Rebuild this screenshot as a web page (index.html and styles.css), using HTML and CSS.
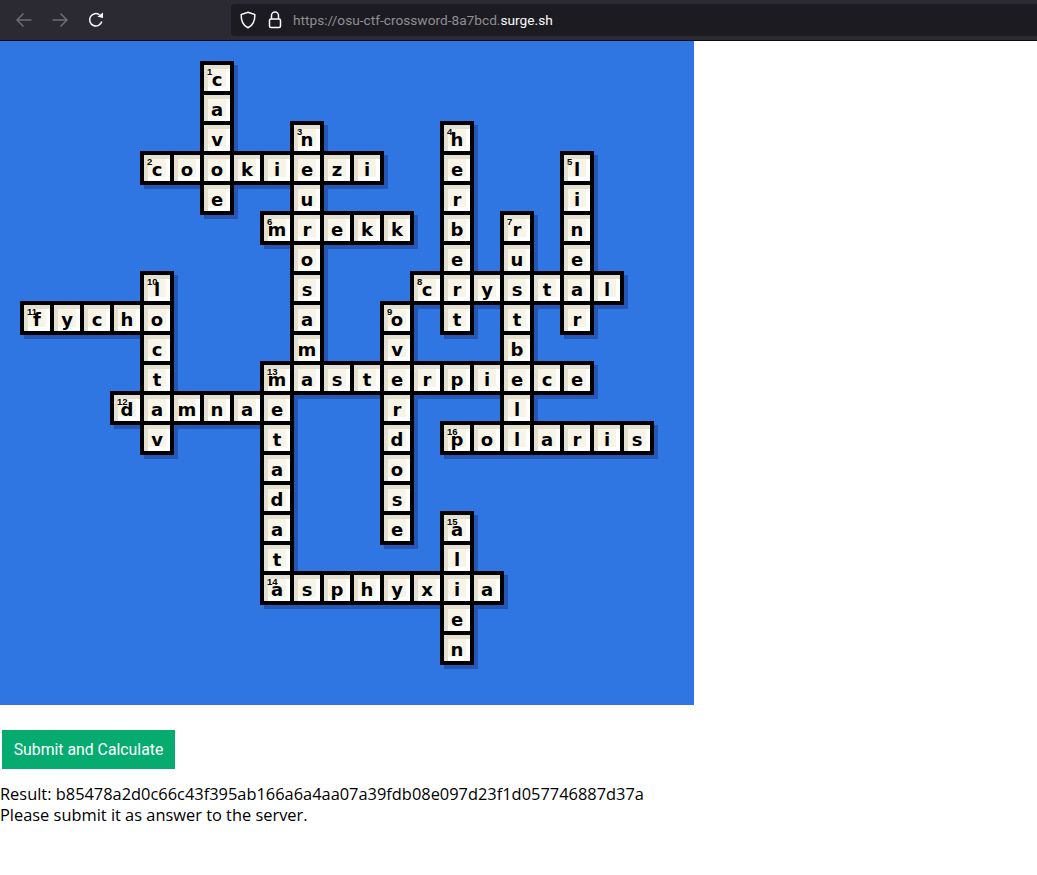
FILE: index.html
```html
<!DOCTYPE html>
<html lang="en">
<head>
  <meta charset="UTF-8">
  <title>osu! CTF Crossword</title>
  <link rel="stylesheet" href="styles.css">
</head>
<body>

  <div class="toolbar">
    <svg class="nav-icon dim" width="16" height="16" viewBox="0 0 16 16"><path d="M15.5 8H1M7.5 1.5 1 8l6.5 6.5"/></svg>
    <svg class="nav-icon dim" width="16" height="16" viewBox="0 0 16 16"><path d="M.5 8H15M8.5 1.5 15 8l-6.500 6.500"/></svg>
    <svg class="nav-icon" width="16" height="16" viewBox="0 0 16 16"><path d="M13.800 9.500A6.200 6.200 0 1 1 11.500 2.800"/><path class="solid" d="M9.500 4.800 15 6V.5z"/></svg>
    <div class="urlbar">
      <svg class="url-icon" width="16" height="18" viewBox="0 0 16 18"><path d="M8 1.200 14.800 3.500C15 9.500 13 14.500 8 16.800 3 14.500 1 9.500 1.200 3.500z"/></svg>
      <svg class="url-icon" width="14" height="18" viewBox="0 0 14 18"><path d="M3.500 8V4.500a3.500 3.500 0 0 1 7 0V8"/><rect x="1.500" y="8" width="11" height="8.500" rx="1.500"/></svg>
      <span class="url">https://osu-ctf-crossword-8a7bcd.<b>surge.sh</b></span>
    </div>
  </div>

  <div class="board">
    <!-- 1 down -->
    <div class="cell" style="grid-area:1/7"><i>1</i>c</div>
    <div class="cell" style="grid-area:2/7">a</div>
    <div class="cell" style="grid-area:3/7">v</div>
    <div class="cell" style="grid-area:5/7">e</div>
    <!-- 2 across -->
    <div class="cell" style="grid-area:4/5"><i>2</i>c</div>
    <div class="cell" style="grid-area:4/6">o</div>
    <div class="cell" style="grid-area:4/7">o</div>
    <div class="cell" style="grid-area:4/8">k</div>
    <div class="cell" style="grid-area:4/9">i</div>
    <div class="cell" style="grid-area:4/10">e</div>
    <div class="cell" style="grid-area:4/11">z</div>
    <div class="cell" style="grid-area:4/12">i</div>
    <!-- 3 down -->
    <div class="cell" style="grid-area:3/10"><i>3</i>n</div>
    <div class="cell" style="grid-area:5/10">u</div>
    <div class="cell" style="grid-area:7/10">o</div>
    <div class="cell" style="grid-area:8/10">s</div>
    <div class="cell" style="grid-area:9/10">a</div>
    <div class="cell" style="grid-area:10/10">m</div>
    <!-- 4 down -->
    <div class="cell" style="grid-area:3/15"><i>4</i>h</div>
    <div class="cell" style="grid-area:4/15">e</div>
    <div class="cell" style="grid-area:5/15">r</div>
    <div class="cell" style="grid-area:6/15">b</div>
    <div class="cell" style="grid-area:7/15">e</div>
    <div class="cell" style="grid-area:9/15">t</div>
    <!-- 5 down -->
    <div class="cell" style="grid-area:4/19"><i>5</i>l</div>
    <div class="cell" style="grid-area:5/19">i</div>
    <div class="cell" style="grid-area:6/19">n</div>
    <div class="cell" style="grid-area:7/19">e</div>
    <div class="cell" style="grid-area:9/19">r</div>
    <!-- 6 across -->
    <div class="cell" style="grid-area:6/9"><i>6</i>m</div>
    <div class="cell" style="grid-area:6/10">r</div>
    <div class="cell" style="grid-area:6/11">e</div>
    <div class="cell" style="grid-area:6/12">k</div>
    <div class="cell" style="grid-area:6/13">k</div>
    <!-- 7 down -->
    <div class="cell" style="grid-area:6/17"><i>7</i>r</div>
    <div class="cell" style="grid-area:7/17">u</div>
    <div class="cell" style="grid-area:9/17">t</div>
    <div class="cell" style="grid-area:10/17">b</div>
    <div class="cell" style="grid-area:12/17">l</div>
    <!-- 8 across -->
    <div class="cell" style="grid-area:8/14"><i>8</i>c</div>
    <div class="cell" style="grid-area:8/15">r</div>
    <div class="cell" style="grid-area:8/16">y</div>
    <div class="cell" style="grid-area:8/17">s</div>
    <div class="cell" style="grid-area:8/18">t</div>
    <div class="cell" style="grid-area:8/19">a</div>
    <div class="cell" style="grid-area:8/20">l</div>
    <!-- 9 down -->
    <div class="cell" style="grid-area:9/13"><i>9</i>o</div>
    <div class="cell" style="grid-area:10/13">v</div>
    <div class="cell" style="grid-area:12/13">r</div>
    <div class="cell" style="grid-area:13/13">d</div>
    <div class="cell" style="grid-area:14/13">o</div>
    <div class="cell" style="grid-area:15/13">s</div>
    <div class="cell" style="grid-area:16/13">e</div>
    <!-- 10 down -->
    <div class="cell" style="grid-area:8/5"><i>10</i>l</div>
    <div class="cell" style="grid-area:10/5">c</div>
    <div class="cell" style="grid-area:11/5">t</div>
    <div class="cell" style="grid-area:13/5">v</div>
    <!-- 11 across -->
    <div class="cell" style="grid-area:9/1"><i>11</i>f</div>
    <div class="cell" style="grid-area:9/2">y</div>
    <div class="cell" style="grid-area:9/3">c</div>
    <div class="cell" style="grid-area:9/4">h</div>
    <div class="cell" style="grid-area:9/5">o</div>
    <!-- 12 across -->
    <div class="cell" style="grid-area:12/4"><i>12</i>d</div>
    <div class="cell" style="grid-area:12/5">a</div>
    <div class="cell" style="grid-area:12/6">m</div>
    <div class="cell" style="grid-area:12/7">n</div>
    <div class="cell" style="grid-area:12/8">a</div>
    <div class="cell" style="grid-area:12/9">e</div>
    <!-- 13 across -->
    <div class="cell" style="grid-area:11/9"><i>13</i>m</div>
    <div class="cell" style="grid-area:11/10">a</div>
    <div class="cell" style="grid-area:11/11">s</div>
    <div class="cell" style="grid-area:11/12">t</div>
    <div class="cell" style="grid-area:11/13">e</div>
    <div class="cell" style="grid-area:11/14">r</div>
    <div class="cell" style="grid-area:11/15">p</div>
    <div class="cell" style="grid-area:11/16">i</div>
    <div class="cell" style="grid-area:11/17">e</div>
    <div class="cell" style="grid-area:11/18">c</div>
    <div class="cell" style="grid-area:11/19">e</div>
    <!-- metadata down, no number of its own -->
    <div class="cell" style="grid-area:13/9">t</div>
    <div class="cell" style="grid-area:14/9">a</div>
    <div class="cell" style="grid-area:15/9">d</div>
    <div class="cell" style="grid-area:16/9">a</div>
    <div class="cell" style="grid-area:17/9">t</div>
    <!-- 14 across -->
    <div class="cell" style="grid-area:18/9"><i>14</i>a</div>
    <div class="cell" style="grid-area:18/10">s</div>
    <div class="cell" style="grid-area:18/11">p</div>
    <div class="cell" style="grid-area:18/12">h</div>
    <div class="cell" style="grid-area:18/13">y</div>
    <div class="cell" style="grid-area:18/14">x</div>
    <div class="cell" style="grid-area:18/15">i</div>
    <div class="cell" style="grid-area:18/16">a</div>
    <!-- 15 down -->
    <div class="cell" style="grid-area:16/15"><i>15</i>a</div>
    <div class="cell" style="grid-area:17/15">l</div>
    <div class="cell" style="grid-area:19/15">e</div>
    <div class="cell" style="grid-area:20/15">n</div>
    <!-- 16 across -->
    <div class="cell" style="grid-area:13/15"><i>16</i>p</div>
    <div class="cell" style="grid-area:13/16">o</div>
    <div class="cell" style="grid-area:13/17">l</div>
    <div class="cell" style="grid-area:13/18">a</div>
    <div class="cell" style="grid-area:13/19">r</div>
    <div class="cell" style="grid-area:13/20">i</div>
    <div class="cell" style="grid-area:13/21">s</div>
  </div>

  <button class="submit">Submit and Calculate</button>

  <div class="result">
    Result: b85478a2d0c66c43f395ab166a6a4aa07a39fdb08e097d23f1d057746887d37a<br>
    Please submit it as answer to the server.
  </div>

</body>
</html>
```

FILE: styles.css
```css
body {
  margin: 0;
  background: #fff;
  color: #000;
  font-family: "Open Sans", sans-serif;
}
.toolbar {
  display: flex;
  align-items: center;
  height: 40px;
  background: #2b2a33;
  border-bottom: 1px solid #0c0c0d;
  padding-left: 16px;
}
.nav-icon {
  margin-right: 20px;
  fill: none;
  stroke: #fbfbfe;
  stroke-width: 1.5;
}
.nav-icon.dim {
  stroke: #6e6d75;
}
.nav-icon .solid {
  fill: #fbfbfe;
  stroke: none;
}
.urlbar {
  flex: 1;
  display: flex;
  align-items: center;
  height: 32px;
  margin-left: 107px;
  padding-left: 9px;
  background: #1c1b22;
  border-radius: 4px 0 0 4px;
}
.url-icon {
  margin-right: 12px;
  fill: none;
  stroke: #fbfbfe;
  stroke-width: 1.5;
}
.url {
  margin-left: -1px;
  font: 13.7px "Roboto", sans-serif;
  color: #8f8f94;
}
.url b {
  font-weight: normal;
  color: #fbfbfe;
}
.board {
  isolation: isolate;
  display: grid;
  grid-template-columns: repeat(22, 30px);
  grid-auto-rows: 30px;
  width: 654px;
  height: 624px;
  padding: 20px;
  background: #2f76e3;
  align-content: start;
}
.cell {
  position: relative;
  box-sizing: border-box;
  width: 34px;
  height: 34px;
  border: 4px solid #000;
  background: #f8f5e8;
  box-shadow: inset 4px 4px 0 #e3e0d2, inset -4px -4px 0 #fff;
  font: bold 18px/30px "DejaVu Sans", sans-serif;
  text-align: center;
}
.cell::before {
  content: "";
  position: absolute;
  inset: 0;
  margin: -4px;
  transform: translate(4px, 4px);
  background: #2458b4;
  z-index: -1;
}
.cell i {
  position: absolute;
  top: 2px;
  left: 3px;
  font: bold 9.5px/10px "Liberation Sans", sans-serif;
}
.submit {
  display: block;
  margin: 25px 0 14px 2px;
  width: 173px;
  height: 39px;
  border: none;
  background: #05ab6f;
  color: #fff;
  font: 15.8px "Roboto", sans-serif;
}
.result {
  font-size: 16.4px;
  line-height: 21px;
}
```
